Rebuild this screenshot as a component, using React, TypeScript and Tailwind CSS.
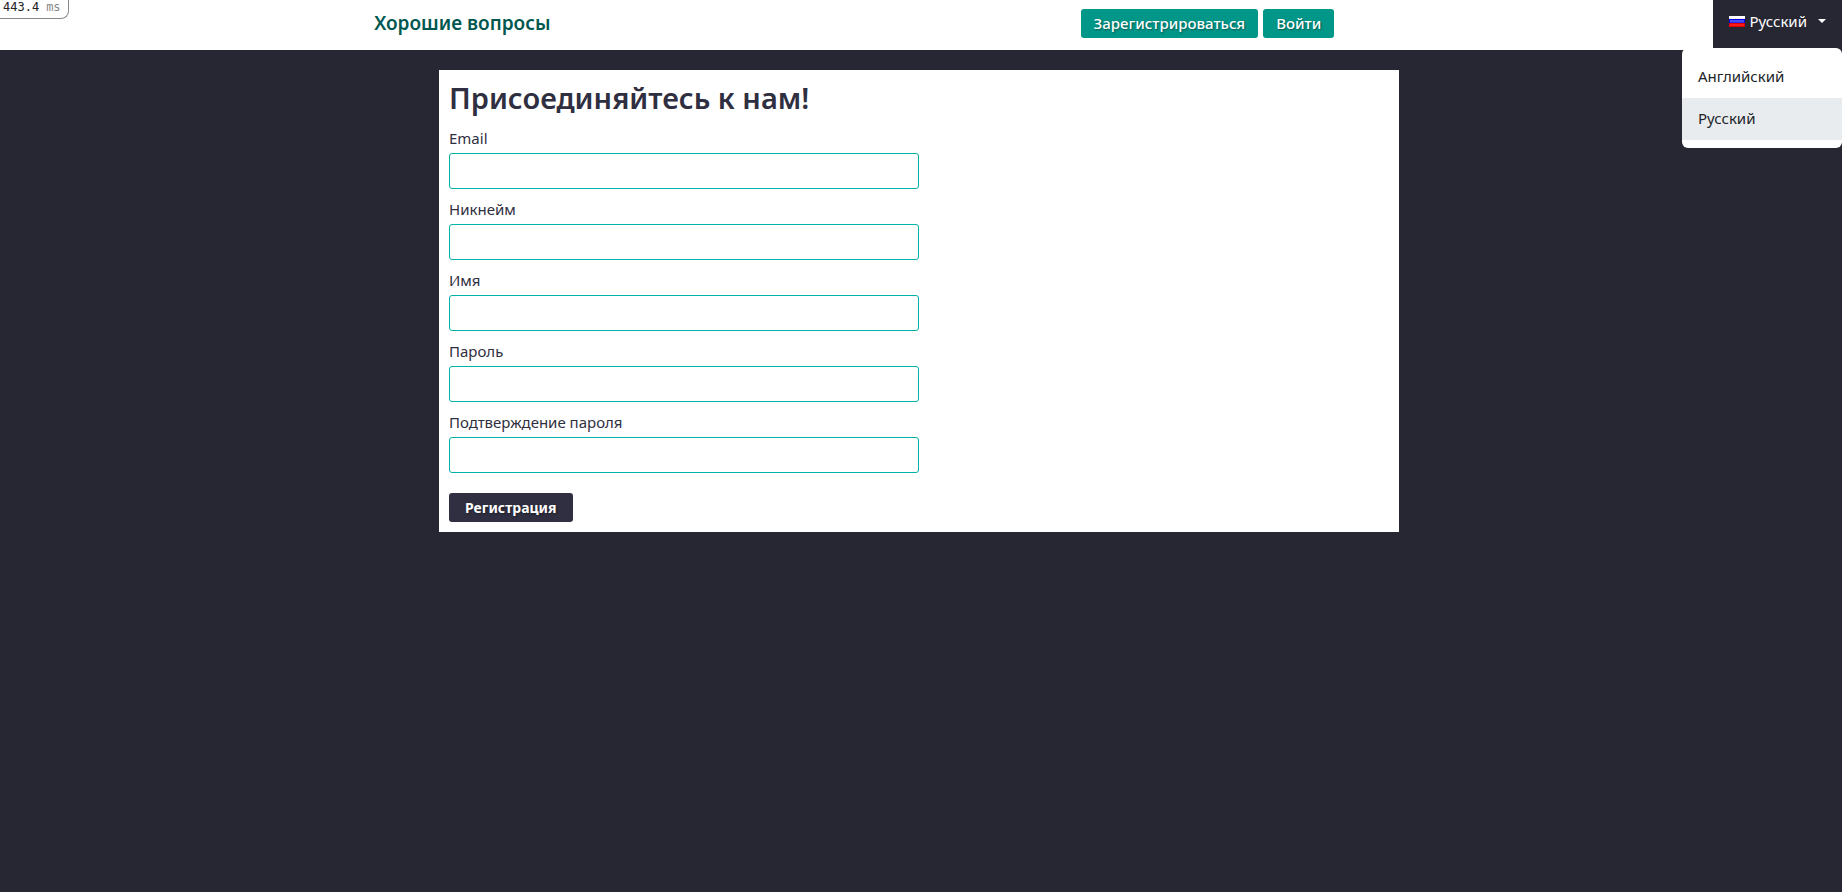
const fields = [
  { id: 'email', label: 'Email', type: 'email' },
  { id: 'nickname', label: 'Никнейм', type: 'text' },
  { id: 'name', label: 'Имя', type: 'text' },
  { id: 'password', label: 'Пароль', type: 'password' },
  { id: 'password-confirmation', label: 'Подтверждение пароля', type: 'password' },
];

const languages = [
  { code: 'en', label: 'Английский', active: false },
  { code: 'ru', label: 'Русский', active: true },
];

function RussianFlag() {
  return (
    <svg className="h-[11px] w-4" viewBox="0 0 16 11" aria-hidden="true" shapeRendering="crispEdges">
      <rect width="16" height="11" fill="#ffffff" />
      <rect y="2" width="16" height="1" fill="#f0f0f0" />
      <rect y="3" width="16" height="4" fill="#0000e6" />
      <rect x="1" y="4" width="14" height="2" fill="#4a4af5" />
      <rect x="1" y="6" width="14" height="1" fill="#2c2cf0" />
      <rect y="7" width="16" height="4" fill="#e00000" />
      <rect x="1" y="8" width="14" height="2" fill="#fa1a1a" />
    </svg>
  );
}

function LoadTimer() {
  return (
    <div className="absolute top-0 left-0 flex h-[19px] w-[69px] items-start gap-[7px] rounded-br-lg border-r border-b border-[#888888] bg-white pl-[3px] font-['DejaVu_Sans_Mono',monospace] text-[12px] leading-[14px] text-[#222222]">
      <span>443.4</span>
      <span className="text-[#888888]">ms</span>
    </div>
  );
}

function LanguageMenu() {
  return (
    <div className="relative bg-[#272733]">
      <button
        type="button"
        aria-haspopup="menu"
        aria-expanded="true"
        className="flex h-12 items-center px-4 pb-1.5 text-[15px] leading-6 text-white"
      >
        <RussianFlag />
        <span className="ml-[5px]">Русский</span>
        <svg className="ml-[11px] h-1 w-2" viewBox="0 0 8 4" aria-hidden="true">
          <path d="M0 0h8L4 4z" fill="currentColor" />
        </svg>
      </button>
      <div className="absolute top-12 right-0 w-40 rounded-md bg-white py-2" role="menu">
        {languages.map((language) => (
          <a
            key={language.code}
            href={`#${language.code}`}
            role="menuitem"
            className={
              language.active
                ? 'block bg-[#e9ecef] px-4 pt-2 pb-[10px] text-[15px] leading-6 text-[#212529]'
                : 'block px-4 pt-2 pb-[10px] text-[15px] leading-6 text-[#212529]'
            }
          >
            {language.label}
          </a>
        ))}
      </div>
    </div>
  );
}

export default function App() {
  return (
    <div className="relative min-h-screen bg-[#272733] font-['Noto_Sans',sans-serif] text-[#2f2f41]">
      <header className="flex h-[50px] bg-white">
        <div className="flex min-w-0 flex-1 justify-center pr-1">
          <div className="flex w-full max-w-[960px] items-center justify-between">
            <a href="#home" className="mb-1 text-[19px] leading-7 font-semibold text-[#00574f]">
              Хорошие вопросы
            </a>
            <nav className="mb-[3px] flex gap-[5px]">
              <a
                href="#register"
                className="flex h-[29px] items-center rounded-[3px] bg-[#009688] px-[13px] text-[15px] font-medium text-white text-shadow-[1px_1px_2px_rgb(0_0_0/0.4)]"
              >
                Зарегистрироваться
              </a>
              <a
                href="#login"
                className="flex h-[29px] items-center rounded-[3px] bg-[#009688] px-[13px] text-[15px] font-medium text-white text-shadow-[1px_1px_2px_rgb(0_0_0/0.4)]"
              >
                Войти
              </a>
            </nav>
          </div>
        </div>
        <LanguageMenu />
      </header>

      <div className="flex justify-center pt-5 pr-1">
        <main className="w-full max-w-[960px] bg-white p-[10px]">
          <h1 className="mb-3 text-[29px] leading-9 font-semibold">Присоединяйтесь к нам!</h1>
          <form>
            {fields.map((field) => (
              <div key={field.id} className="mb-[10px] flex flex-col">
                <label htmlFor={field.id} className="pb-1 text-[15px] leading-[21px]">
                  {field.label}
                </label>
                <input
                  id={field.id}
                  name={field.id}
                  type={field.type}
                  className="h-9 w-1/2 rounded-[3px] border border-[#00b3a8] bg-white px-2 text-[15px] outline-none"
                />
              </div>
            ))}
            <button
              type="submit"
              className="mt-5 block h-[29px] rounded-[3px] bg-[#2f2f41] px-4 text-[14px] font-bold text-white text-shadow-[1px_1px_2px_rgb(0_0_0/0.4)]"
            >
              Регистрация
            </button>
          </form>
        </main>
      </div>

      <LoadTimer />
    </div>
  );
}
